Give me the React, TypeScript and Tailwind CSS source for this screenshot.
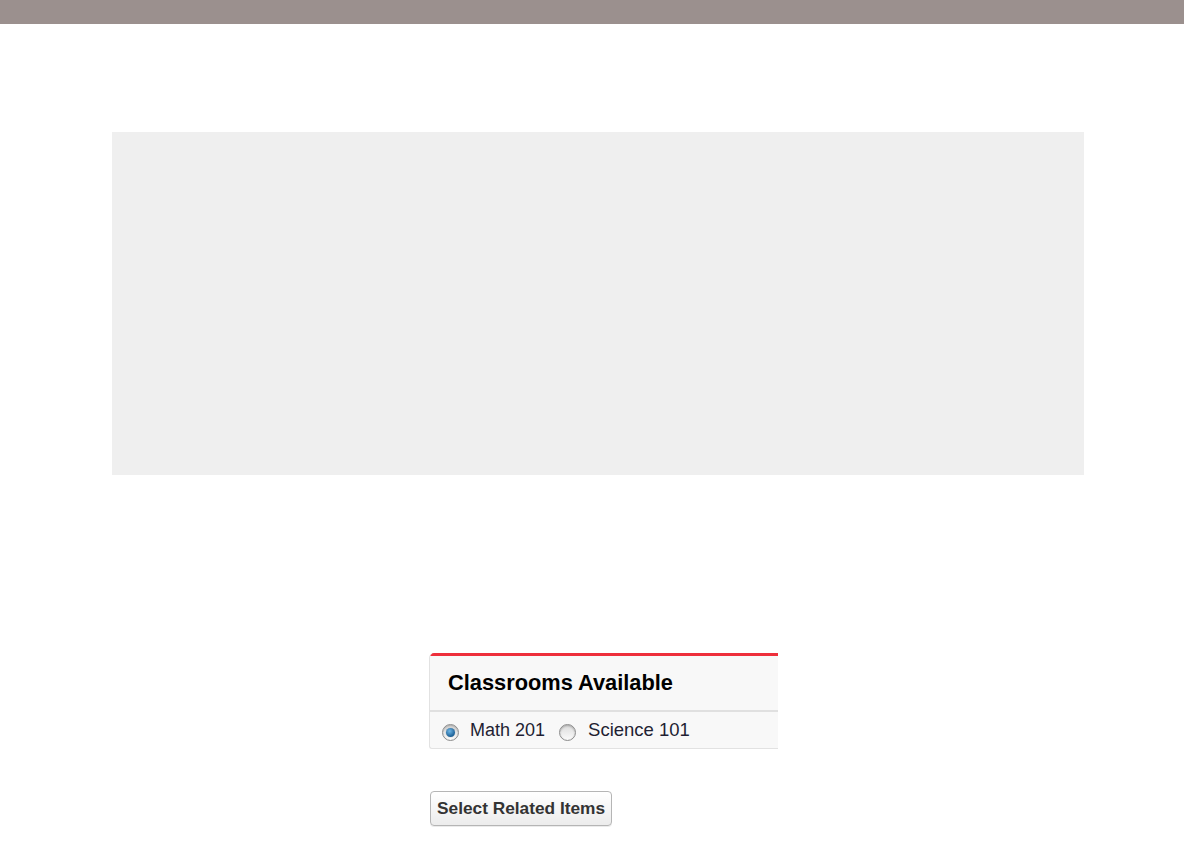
import { useState } from "react";

const font = { fontFamily: '"Liberation Sans", Arial, sans-serif' };

function Radio({ checked, onClick }: { checked: boolean; onClick: () => void }) {
  return (
    <button
      type="button"
      onClick={onClick}
      className="flex h-[17px] w-[17px] shrink-0 items-center justify-center rounded-full border border-[#8c8c8c] bg-gradient-to-b from-[#dcdcdc] to-[#fbfbfb] shadow-[inset_0_1px_2px_rgba(0,0,0,0.25)]"
    >
      {checked && (
        <span className="h-[9px] w-[9px] rounded-full bg-[radial-gradient(circle_at_40%_35%,#6fb6e6,#1b5f95_70%)] shadow-[0_0_1px_rgba(0,0,0,0.5)]" />
      )}
    </button>
  );
}

export default function App() {
  const [room, setRoom] = useState("math");

  return (
    <div className="min-h-[855px] bg-white" style={font}>
      <div className="h-[24px] bg-[#9b908e]" />

      <div className="ml-[112px] mt-[108px] h-[343px] w-[972px] bg-[#efefef]" />

      <div className="ml-[429px] mt-[178px] w-[349px] overflow-hidden rounded-tl-[5px] rounded-bl-[3px] border-l border-b border-[#e2e2e2] bg-[#f8f8f8]">
        <div className="h-[3px] bg-[#ee2f3b]" />
        <div className="flex h-[56px] items-center border-b-2 border-[#e0e0e0] pl-[18px]">
          <h2 className="text-[21.8px] font-bold leading-none text-black">Classrooms Available</h2>
        </div>
        <div className="flex h-[36px] items-center pl-[12px] text-[18px] text-[#1f1f33]">
          <label className="flex items-center">
            <span className="mt-[5px]">
              <Radio checked={room === "math"} onClick={() => setRoom("math")} />
            </span>
            <span className="ml-[11px]">Math 201</span>
          </label>
          <label className="ml-[14px] flex items-center">
            <span className="mt-[5px]">
              <Radio checked={room === "science"} onClick={() => setRoom("science")} />
            </span>
            <span className="ml-[12px] text-[18.5px]">Science 101</span>
          </label>
        </div>
      </div>

      <button
        type="button"
        className="ml-[430px] mt-[42px] flex h-[35px] items-center rounded-[4px] border border-[#b5b5b5] bg-gradient-to-b from-white to-[#ececec] px-[6px] text-[17.3px] font-bold text-[#333] shadow-[0_1px_0_rgba(0,0,0,0.08)]"
      >
        Select Related Items
      </button>
    </div>
  );
}
